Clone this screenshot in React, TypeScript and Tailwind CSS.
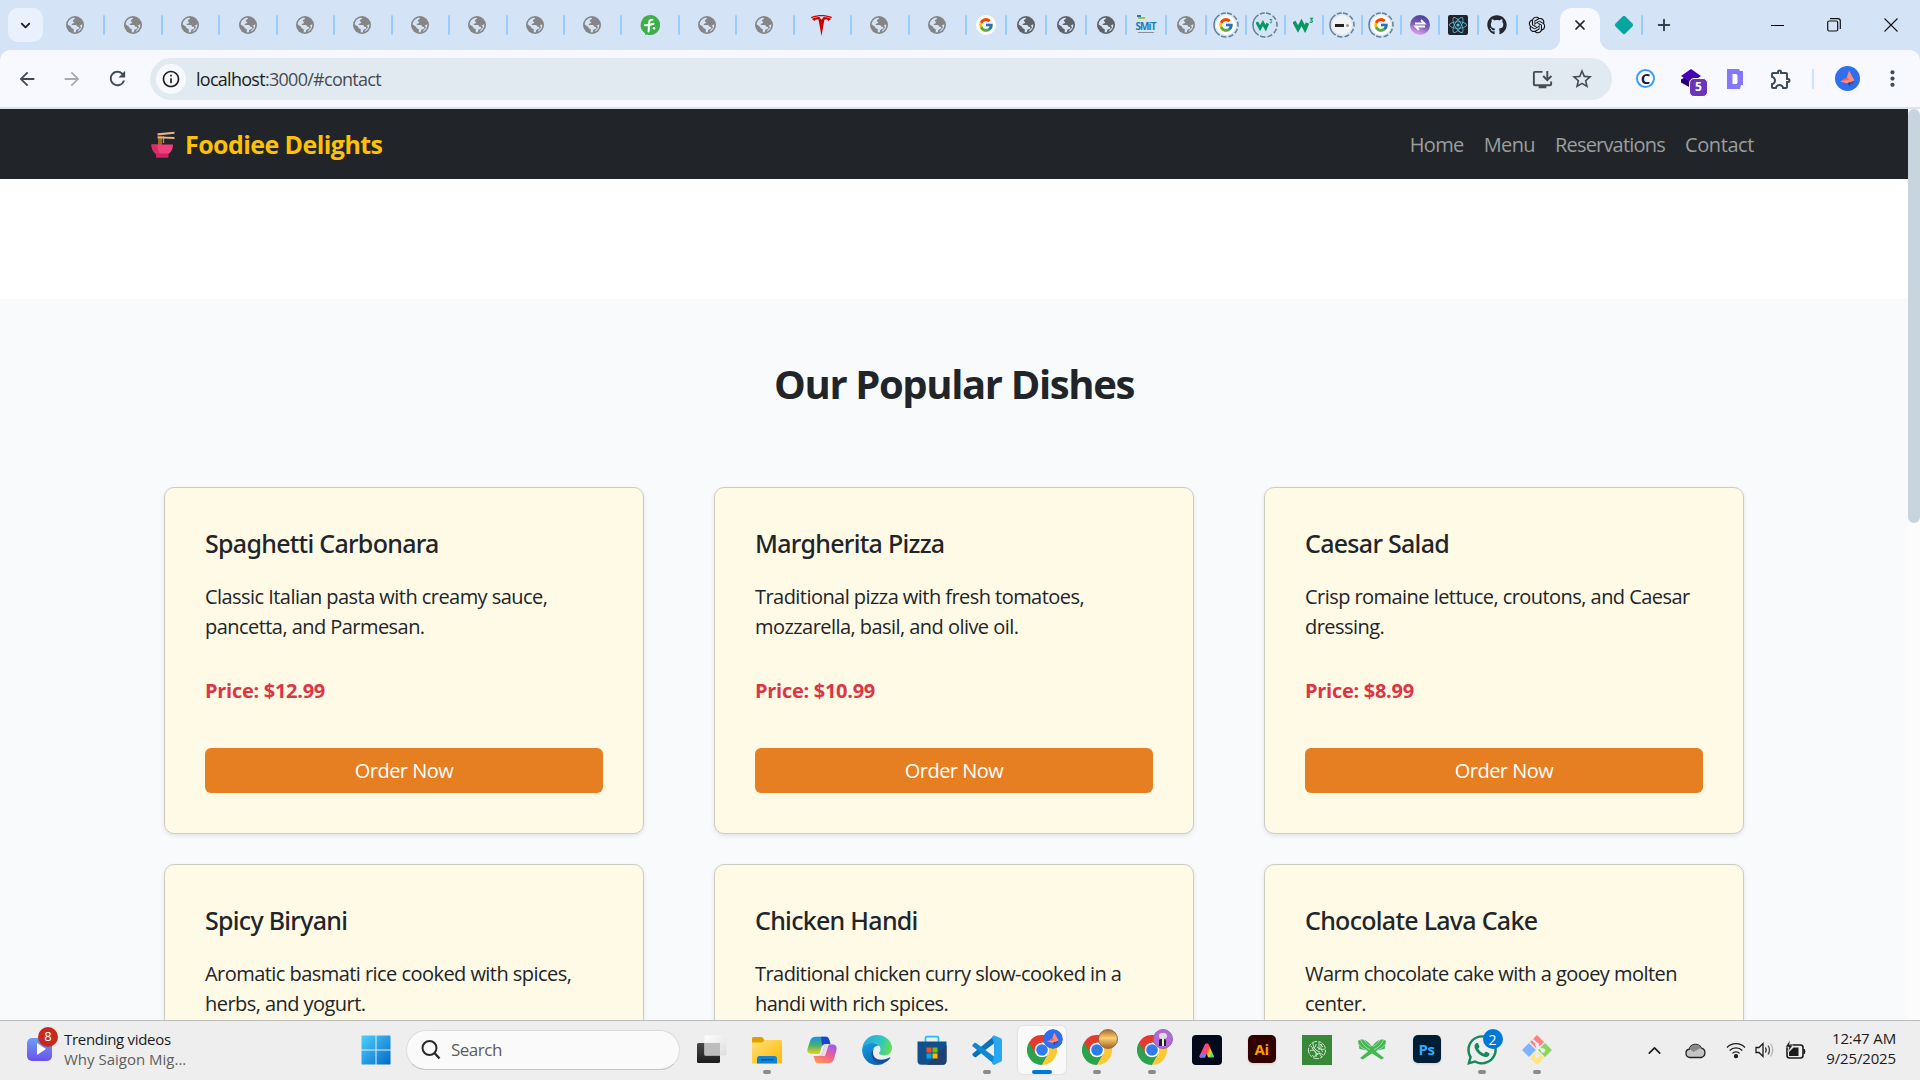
import type { ReactNode } from 'react';
import { FcGoogle } from 'react-icons/fc';
import { FaGithub, FaWhatsapp, FaReact } from 'react-icons/fa';
import { SiTesla } from 'react-icons/si';
import {
  MdArrowBack,
  MdArrowForward,
  MdRefresh,
  MdInfoOutline,
  MdOutlineInstallDesktop,
  MdStarOutline,
  MdOutlineExtension,
  MdMoreVert,
} from 'react-icons/md';
import { RiOpenaiFill } from 'react-icons/ri';
import { ChevronDown, ChevronUp, Plus, X } from 'lucide-react';

/* ---------- tab favicons ---------- */

function Globe({ color = '#858585' }: { color?: string }) {
  return (
    <svg width="18" height="18" viewBox="0 0 18 18">
      <circle cx="9" cy="9" r="9" fill={color} />
      <path d="M1.700 8.500C1.800 5 4.500 2.200 8 1.700c.8 0 1.100.5.800 1.100-.3.700-1.500.8-1.900 1.600-.3.700.2 1.300 1.300 1.300.2 1.400-1 1.800-2 2-.9.200-.700 1.200.1 1.200h3.200c1.100 0 1.700.8 1.700 1.800 1.300.1 2.200.2 2.200 1.300 0 .8-.8 1.100-1.800 1.200-1 .1-1.500.9-1.600 2l-.1 1.100c-.7.1-1.500.1-2.200-.1l.1-2.200c0-1-.6-1.400-1.500-1.500-.9-.2-1.200-.8-1.200-1.700z" fill="#d5e3f7" />
      <path d="M16.200 8.300c.4 3.300-1.600 6.500-4.800 7.600l1.400-2.200c.5-.9 1.900-1 2-2.200.1-1-.5-1.500-1.300-1.700z" fill="#d5e3f7" />
    </svg>
  );
}

function DashedRing({ children }: { children: ReactNode }) {
  return (
    <span className="relative flex size-[26px] items-center justify-center">
      <svg className="absolute inset-0" width="26" height="26" viewBox="0 0 26 26" fill="none">
        <path d="M13 25a12 12 0 0 1 0-24" stroke="#5f8299" strokeWidth="1.500" strokeDasharray="5 1.600 24 1.600" />
        <path d="M13 1a12 12 0 0 1 0 24" stroke="#5f8299" strokeWidth="1.500" strokeDasharray="5 2.200" strokeDashoffset="-1" />
      </svg>
      {children}
    </span>
  );
}

function GoogleDisc({ size = 'size-5' }: { size?: string }) {
  return (
    <span className={`flex items-center justify-center rounded-full bg-white ${size}`}>
      <FcGoogle size={16} />
    </span>
  );
}

function W3({ small = false }: { small?: boolean }) {
  return (
    <svg width={small ? 17 : 21} height={small ? 14 : 16} viewBox="0 0 21 16" fill="none">
      <path d="M1 4.500 5 12l3.500-6.500L12 12l2.500-6" stroke="#059862" strokeWidth="3.600" />
      <path d="M16.800 1.200h2.800l-1.500 1.800c1.600 0 1.800 2.400.2 2.400-.8 0-1.300-.3-1.600-.8" stroke="#059862" strokeWidth="1.100" />
    </svg>
  );
}

function GreenF() {
  return (
    <svg width="20" height="22" viewBox="0 0 20 22">
      <path d="M10 1a10 10 0 1 1-3 19.500L5 21l.3-1.600A10 10 0 0 1 10 1z" fill="#3dae49" />
      <path d="M12.500 5.800C10.500 5.200 9.300 6.400 9.200 8.500L8.600 17.500M4.800 11.200c3 .3 5.500-.2 8.700-1.400" stroke="#fff" strokeWidth="2" fill="none" strokeLinecap="round" />
      <circle cx="14" cy="14.200" r="1.300" fill="#fff" />
    </svg>
  );
}

function Smit() {
  return (
    <span className="relative flex h-5 w-[18px] flex-col items-center justify-center">
      <span className="absolute top-0 left-0 h-[2px] w-[4px] bg-[#1c7bc0]" />
      <span className="absolute top-[2px] left-[1px] h-[2px] w-[7px] bg-[#9bc53d]" />
      <span className="mt-[4px] text-[10px] leading-[11px] font-bold tracking-[-0.09em] text-[#1c7bb5]">SMiT</span>
      <span className="h-px w-4 bg-[#8a8f94]" />
    </span>
  );
}

function PurpleSwap() {
  return (
    <svg width="20" height="20" viewBox="0 0 20 20">
      <defs>
        <linearGradient id="swap" x1="0.600" y1="0" x2="0.300" y2="1">
          <stop offset="0" stopColor="#45439b" />
          <stop offset="0.500" stopColor="#7d5bb8" />
          <stop offset="1" stopColor="#e6aaf0" />
        </linearGradient>
      </defs>
      <circle cx="10" cy="10" r="10" fill="url(#swap)" />
      <path d="M5 8.500h9.500L11 5M15 11.500H5.500L9 15" stroke="#fff" strokeWidth="1.800" fill="none" />
    </svg>
  );
}

const globe = <Globe />;
const darkGlobe = <Globe color="#5f6368" />;

const wideTabs: ReactNode[] = [
  globe, globe, globe, globe, globe, globe, globe, globe, globe, globe,
  <GreenF />, globe, globe,
  <SiTesla size={21} color="#cc0000" />,
  globe, globe,
];

const midTabs: ReactNode[] = [
  <GoogleDisc />, darkGlobe, darkGlobe, darkGlobe, <Smit />, globe,
  <DashedRing><GoogleDisc /></DashedRing>,
];

const narrowTabs: ReactNode[] = [
  <DashedRing><W3 small /></DashedRing>,
  <W3 />,
  <DashedRing>
    <span className="flex size-5 items-center justify-center gap-[2px] rounded-full bg-[#f2f2f2]">
      <span className="h-[3px] w-[9px] bg-[#222]" />
      <span className="size-[3px] rounded-full bg-[#999]" />
    </span>
  </DashedRing>,
  <DashedRing><GoogleDisc /></DashedRing>,
  <PurpleSwap />,
  <span className="flex size-5 items-center justify-center rounded-[2px] bg-[#20232a]">
    <FaReact size={18} color="#58c4dc" />
  </span>,
  <FaGithub size={20} color="#24292f" />,
];

function Tab({ width, children }: { width: string; children: ReactNode }) {
  return (
    <div className={`flex h-full shrink-0 items-center justify-center ${width}`}>
      <span className="flex flex-1 items-center justify-center">{children}</span>
      <span className="-mr-px h-5 w-[2px] rounded-full bg-[#96ccff]" />
    </div>
  );
}

function TabStrip() {
  return (
    <div className="flex h-[50px] items-center bg-[#d5e3f7]">
      <button className="mr-1 ml-2 flex h-[34px] w-[35px] shrink-0 items-center justify-center rounded-[10px] bg-[#e8f1fd]">
        <ChevronDown size={15} strokeWidth={3} color="#1f1f1f" />
      </button>
      {wideTabs.map((icon, i) => <Tab key={i} width="w-[57.45px]">{icon}</Tab>)}
      {midTabs.map((icon, i) => <Tab key={i} width="w-[40px]">{icon}</Tab>)}
      {narrowTabs.map((icon, i) => <Tab key={i} width="w-[38.7px]">{icon}</Tab>)}
      <div className="flex w-[43px] shrink-0 items-center justify-center pr-[3px]">
        <RiOpenaiFill size={20} color="#111" />
      </div>
      <div className="relative flex h-[42px] w-[40px] shrink-0 items-center justify-center self-end rounded-t-xl bg-[#f8f9ff] pb-2">
        <span className="absolute bottom-0 -left-3 size-3 bg-[radial-gradient(circle_at_0_0,#d5e3f7_12px,#f8f9ff_12.500px)]" />
        <span className="absolute -right-3 bottom-0 size-3 bg-[radial-gradient(circle_at_100%_0,#d5e3f7_12px,#f8f9ff_12.500px)]" />
        <X size={16} strokeWidth={2.600} color="#1f1f1f" />
      </div>
      <div className="ml-[5px] flex h-full w-[38px] shrink-0 items-center justify-center">
        <span className="flex flex-1 justify-center pl-[2px]">
          <span className="size-[14px] rotate-45 rounded-[2px] bg-[#06a5a0]" />
        </span>
        <span className="h-5 w-[2px] rounded-full bg-[#96ccff]" />
      </div>
      <Plus className="ml-[12px]" size={18} strokeWidth={2.600} color="#33404f" />
      <div className="ml-auto flex items-center gap-[43px] pr-[22px]">
        <span className="h-px w-[13px] bg-black" />
        <svg width="14" height="14" viewBox="0 0 14 14" fill="none" stroke="#111" strokeWidth="1.200">
          <rect x="0.700" y="3" width="10" height="10" rx="1.500" />
          <path d="M3 .7h8a2.300 2.300 0 0 1 2.300 2.300v8" />
        </svg>
        <svg width="14" height="14" viewBox="0 0 14 14" stroke="#111" strokeWidth="1.100">
          <path d="M.5.5l13 13M13.500.5l-13 13" />
        </svg>
      </div>
    </div>
  );
}

function Bird({ className }: { className: string }) {
  return (
    <svg className={className} viewBox="0 0 25 25">
      <circle cx="12.500" cy="12.500" r="12.500" fill="#2f6fed" />
      <path d="M14 4.500 19.500 14.500 14 17.500 12 11z" fill="#ff8a76" />
      <path d="M5 15.500 12 11l3 4.500-2.500 1.500z" fill="#f2625c" />
      <path d="M5 15.500l9-1.500 1 2.500-3 .8z" fill="#ff8f7c" />
      <path d="M12.500 17l3-1 -.5 4.500z" fill="#283a8f" />
      <path d="M14 17l5.500-2.500-2 4z" fill="#4a4a9c" />
    </svg>
  );
}

function Toolbar() {
  return (
    <div className="bg-[#d5e3f7]">
      <div className="flex h-[59px] items-center rounded-t-[10px] border-b-2 border-[#dde3ea] bg-[#f8f9ff]">
        <div className="flex w-[150px] shrink-0 items-center gap-[23px] pl-4">
          <MdArrowBack size={22} color="#3f4b57" />
          <MdArrowForward size={22} color="#a9adb3" />
          <MdRefresh size={23} color="#3f4b57" />
        </div>
        <div className="flex h-[42px] w-[1462px] shrink-0 items-center rounded-full bg-[#e2eaf1] pr-[18px] pl-[6px]">
          <span className="flex size-[30px] items-center justify-center rounded-full bg-[#f8f9ff]">
            <MdInfoOutline size={20} color="#1f1f1f" />
          </span>
          <span className="mt-[2px] ml-[10px] text-[18px] tracking-[-0.72px] text-[#474c52]">
            <span className="text-[#1a1d21]">localhost</span>:3000/#contact
          </span>
          <MdOutlineInstallDesktop className="mt-px ml-auto" size={23} color="#474c52" />
          <MdStarOutline className="mt-px ml-[16px]" size={24} color="#474c52" />
        </div>
        <div className="flex flex-1 items-center">
          <span className="ml-6 flex size-[19px] shrink-0 items-center justify-center rounded-full border-2 border-[#3d9bf5] bg-white text-[15px] leading-none font-bold text-[#101c4a]">
            C
          </span>
          <span className="relative ml-[25px] size-[22px] shrink-0">
            <svg width="22" height="22" viewBox="0 0 22 22">
              <path d="M1 11.500 11 6l10 5.500v3L11 20 1 14.500z" fill="#21006b" />
              <path d="M1 8 11 1l10 7-10 7z" fill="#4a00b4" />
            </svg>
            <span className="absolute top-[10px] left-[9px] flex size-[19px] items-center justify-center rounded-[5px] border border-white bg-[#6a35b8] text-[12px] font-bold text-white">
              5
            </span>
          </span>
          <svg className="ml-[25px] shrink-0" width="16" height="20" viewBox="0 0 16 20">
            <path d="M0 0h12l1 2h3v14h-2l-1 4H0z" fill="#8478ff" />
            <path d="M5.500 5h4l1 1.500v7L9.500 15h-4z" fill="#fff" />
          </svg>
          <MdOutlineExtension className="ml-[26px] shrink-0" size={24} color="#3f4b57" />
          <span className="ml-[19px] h-5 w-[2px] shrink-0 bg-[#cfe4fb]" />
          <Bird className="ml-[21px] size-[25px] shrink-0" />
          <MdMoreVert className="ml-[20px] shrink-0" size={25} color="#3f4b57" />
        </div>
      </div>
    </div>
  );
}

/* ---------- web page ---------- */

interface Dish {
  name: string;
  lines: [string, string];
  price?: string;
}

const dishes: Dish[] = [
  { name: 'Spaghetti Carbonara', lines: ['Classic Italian pasta with creamy sauce,', 'pancetta, and Parmesan.'], price: '12.99' },
  { name: 'Margherita Pizza', lines: ['Traditional pizza with fresh tomatoes,', 'mozzarella, basil, and olive oil.'], price: '10.99' },
  { name: 'Caesar Salad', lines: ['Crisp romaine lettuce, croutons, and Caesar', 'dressing.'], price: '8.99' },
  { name: 'Spicy Biryani', lines: ['Aromatic basmati rice cooked with spices,', 'herbs, and yogurt.'] },
  { name: 'Chicken Handi', lines: ['Traditional chicken curry slow-cooked in a', 'handi with rich spices.'] },
  { name: 'Chocolate Lava Cake', lines: ['Warm chocolate cake with a gooey molten', 'center.'] },
];

function NoodleBowl() {
  return (
    <svg width="24" height="27" viewBox="0 0 24 27">
      <path d="M8 5v9M10 5v9M12.500 5v7" stroke="#c98a1b" strokeWidth="1.400" />
      <path d="M6.500 2.200 23.500 .8v2L6.500 4.500zM6.500 5.500l17 .6v2l-17-.8z" fill="#e8b08c" />
      <path d="M.5 13.500h21.500c0 5-2.500 8.500-5.500 10H6C3 22 .5 18.500.5 13.500z" fill="#f0407f" />
      <path d="M.5 13.500h6c0 5 1 8 3 10H6C3 22 .5 18.500.5 13.500z" fill="#d92d6b" />
      <path d="M5 22.500h12.500V26a1 1 0 0 1-1 .8H6A1 1 0 0 1 5 26z" fill="#c9265c" />
    </svg>
  );
}

function DishCard({ dish }: { dish: Dish }) {
  return (
    <article className="flex h-[347px] flex-col rounded-[10px] border border-[#cdccc4] bg-[#fffae6] p-10 text-[#212529] shadow-[0_2px_5px_rgba(0,0,0,0.09)]">
      <h3 className="font-['Noto_Sans'] text-[25px] leading-[30px] font-medium tracking-[-0.72px]">{dish.name}</h3>
      <p className="mt-6 text-[20px] leading-[30px] tracking-[-0.55px] whitespace-nowrap">
        {dish.lines[0]}
        <br />
        {dish.lines[1]}
      </p>
      {dish.price && (
        <>
          <p className="mt-[34px] text-[20px] leading-[30px] font-bold tracking-[-0.28px] text-[#dc3545]">Price: ${dish.price}</p>
          <button className="mt-auto h-[45px] w-full rounded-[6px] bg-[#e67e22] text-[20px] tracking-[-0.5px] text-white">Order Now</button>
        </>
      )}
    </article>
  );
}

function WebPage() {
  return (
    <div className="flex min-h-0 flex-1 overflow-hidden bg-white">
      <main className="flex w-[1908px] flex-col">
        <nav className="flex h-[70px] shrink-0 items-center justify-between bg-[#212529] pr-[154px] pl-[151px]">
          <div className="flex items-center gap-[10px] text-[25px] font-bold tracking-[-0.57px] text-[#ffc107]">
            <NoodleBowl />
            <span className="mt-[2px]">Foodiee Delights</span>
          </div>
          <div className="mt-[2px] flex items-center gap-5 text-[20px] tracking-[-0.64px] text-[#9b9d9e]">
            <a>Home</a>
            <a>Menu</a>
            <a className="tracking-[-0.8px]">Reservations</a>
            <a className="tracking-[-0.4px]">Contact</a>
          </div>
        </nav>
        <div className="h-[120px] shrink-0 bg-white" />
        <section className="flex-1 bg-[#f8fafc] px-[164px] pt-[61px]">
          <h2 className="text-center text-[40px] leading-[48px] font-bold tracking-[-1.370px] text-[#212529]">Our Popular Dishes</h2>
          <div className="mt-[79px] grid grid-cols-[480px_480px_480px] gap-x-[70px] gap-y-[30px]">
            {dishes.map((d) => <DishCard key={d.name} dish={d} />)}
          </div>
        </section>
      </main>
      <div className="w-3 bg-[#fcfcfc]">
        <div className="h-[414px] rounded-full bg-[#c8d5de]" />
      </div>
    </div>
  );
}

/* ---------- taskbar ---------- */

function WindowsLogo() {
  return (
    <svg className="shrink-0" width="30" height="30" viewBox="0 0 30 30">
      <defs>
        <linearGradient id="win" gradientUnits="userSpaceOnUse" x1="0" y1="0" x2="30" y2="30">
          <stop offset="0" stopColor="#4fd2ff" />
          <stop offset="1" stopColor="#0068c6" />
        </linearGradient>
      </defs>
      <path d="M1 .5h13.500v14H.5V1zM15.500.5H29l.5.5v13.500h-14zM.5 15.500h14v14H1l-.5-.5zM15.500 15.500h14V29l-.5.5H15.500z" fill="url(#win)" />
    </svg>
  );
}

function TaskView() {
  return (
    <svg width="30" height="30" viewBox="0 0 30 30">
      <defs>
        <linearGradient id="tv" x1="0" y1="0" x2="0" y2="1">
          <stop offset="0" stopColor="#4a4a48" />
          <stop offset="1" stopColor="#1c1c1c" />
        </linearGradient>
        <linearGradient id="tvFront" x1="0" y1="0" x2="1" y2="1">
          <stop offset="0" stopColor="#ffffff" />
          <stop offset="1" stopColor="#dcdcdc" />
        </linearGradient>
      </defs>
      <rect x="0" y="8" width="23" height="20" rx="1.500" fill="url(#tv)" />
      <rect x="7.500" y="0.500" width="22" height="20" rx="1.500" fill="url(#tvFront)" />
      <rect x="7.500" y="8" width="15.500" height="12.500" fill="#bdbdbd" />
    </svg>
  );
}

function Folder() {
  return (
    <svg width="30" height="30" viewBox="0 0 30 30">
      <defs>
        <linearGradient id="fold" x1="0" y1="0" x2="1" y2="1">
          <stop offset="0" stopColor="#ffe07a" />
          <stop offset="1" stopColor="#ffb900" />
        </linearGradient>
      </defs>
      <path d="M0 3.500C0 2.500.700 2 1.500 2H10l3 3.500V9H0z" fill="#e0a000" />
      <path d="M0 7.500h10L13 5h15.500c1 0 1.500.600 1.500 1.500v22H0z" fill="url(#fold)" />
      <path d="M5 28.500v-5c0-1.500 1-2.500 2.500-2.500h15c1.500 0 2.500 1 2.500 2.500v5z" fill="#1482d2" />
      <path d="M9 24.700h12.500" stroke="#06549b" strokeWidth="1.300" />
    </svg>
  );
}

function Copilot() {
  return (
    <svg width="30" height="28" viewBox="0 0 30 28">
      <defs>
        <linearGradient id="cpA" x1="0" y1="0" x2="0" y2="1">
          <stop offset="0" stopColor="#1b8fe8" />
          <stop offset="0.500" stopColor="#47b26b" />
          <stop offset="1" stopColor="#f2cf1d" />
        </linearGradient>
        <linearGradient id="cpB" x1="0.800" y1="0" x2="0.200" y2="1">
          <stop offset="0" stopColor="#9a5cf0" />
          <stop offset="0.500" stopColor="#f0608f" />
          <stop offset="1" stopColor="#fb9a53" />
        </linearGradient>
      </defs>
      <path d="M9 .8h10c2 0 2.700 1.300 3.300 3.200l1.200 4h-5c-2.500 0-3.300 1.200-4 3.300L12.500 18H4C.800 18-.200 15.500.6 12.500l2.600-8C4 2 6 .8 9 .8z" fill="url(#cpA)" />
      <path d="M14 .8h5c2 0 2.700 1.300 3.300 3.200l1.200 4h-5c-1.500 0-2.700.5-3.300 2z" fill="#1748c8" />
      <path d="M21 27.200H11c-2 0-2.700-1.300-3.300-3.200L6.500 20h5c2.500 0 3.300-1.200 4-3.300L18 8.500h8c3.200 0 4.200 3 3.400 6l-2.600 9c-.8 2.500-2.800 3.700-5.800 3.700z" fill="url(#cpB)" />
      <path d="M18 8h4L18 20h-5c1.300 0 2-1.200 2.600-3.300z" fill="#eef" fillOpacity="0.850" />
    </svg>
  );
}

function Edge() {
  return (
    <svg width="30" height="30" viewBox="0 0 30 30">
      <defs>
        <linearGradient id="edA" x1="0" y1="0.300" x2="1" y2="0.500">
          <stop offset="0" stopColor="#2aa6e0" />
          <stop offset="0.600" stopColor="#2fc6c4" />
          <stop offset="1" stopColor="#66dd52" />
        </linearGradient>
        <linearGradient id="edB" x1="0" y1="0" x2="0.500" y2="1">
          <stop offset="0" stopColor="#1b9de2" />
          <stop offset="1" stopColor="#0767b9" />
        </linearGradient>
      </defs>
      <path d="M.3 13.500C1 6 7 0 15 0c9 0 15 6.500 15 13 0 4.500-3.300 7.500-7.500 7.500-3.500 0-5.500-1.300-5.500-2.500 0-.8 1.500-1.400 1.500-3.800 0-3.300-3.200-6.200-7.700-6.200C5.500 8 1.500 10.500.3 13.500z" fill="url(#edA)" />
      <path d="M.2 14C1 10.500 5 8 10.500 8c3 0 5.500 1.200 7 3-4-1-7.500 2.500-7 7C11 24 16 28 23 27.500 20.500 29.300 18 30 15 30 6 30-.500 22 .2 14z" fill="url(#edB)" />
      <path d="M12.500 13c-1 1.200-1.500 2.500-1.500 4.500C11 24 18 27 27.500 22.500c.7-.3 1.200.2.700.8-3.700 5.200-9.700 5.700-12.700 4.400C9 25.200 7.500 16.500 12.500 13z" fill="#124f9c" />
    </svg>
  );
}

function Store() {
  return (
    <svg width="30" height="30" viewBox="0 0 30 30">
      <path d="M8.500 7V3c0-.8.500-1.300 1.300-1.300h10.400c.8 0 1.300.5 1.300 1.300v4" stroke="#24bdf2" strokeWidth="1.700" fill="none" />
      <path d="M.5 6.500h29V26c0 2.200-1.600 3.700-3.700 3.700H4.200C2 29.700.5 28.200.5 26z" fill="#12508c" />
      <path d="M10 29.700 29.500 10v16c0 2.200-1.600 3.700-3.700 3.700z" fill="#213f70" />
      <path d="M9.500 12.500h5v5h-5z" fill="#f25022" />
      <path d="M15.500 12.500h5v5h-5z" fill="#7fba00" />
      <path d="M9.500 18.500h5v5h-5z" fill="#00a4ef" />
      <path d="M15.500 18.500h5v5h-5z" fill="#ffb900" />
    </svg>
  );
}

function VsCode() {
  return (
    <svg width="30" height="30" viewBox="0 0 30 30">
      <path d="M22 1 .8 18.500c-.6.600-.6 1.300 0 1.900l1.600 1.500c.5.400 1.100.4 1.700 0L22 8.500z" fill="#0a70b8" />
      <path d="M22 29 .8 11.500c-.6-.600-.6-1.300 0-1.900l1.600-1.500c.5-.400 1.100-.4 1.700 0L22 21.500z" fill="#1388d2" />
      <path d="M22 .2 28.800 3.300c.8.400 1.200 1 1.200 1.900v19.600c0 .9-.4 1.500-1.200 1.900L22 29.900l-2-1.500 2-6.900v-13L20 1.700z" fill="#2aa7f2" />
    </svg>
  );
}

function Chrome({ badge }: { badge: ReactNode }) {
  return (
    <span className="relative block size-[30px]">
      <svg width="30" height="30" viewBox="0 0 30 30">
        <path d="M2 7.500A15 15 0 0 0 15 30l6.500-11.300L15 15z" fill="#2ba24c" />
        <path d="M28 7.500H15L21.500 18.700 15 30A15 15 0 0 0 28 7.500z" fill="#fcc934" />
        <path d="M2 7.500A15 15 0 0 1 28 7.500H15L8.500 18.700z" fill="#e33b2e" />
        <circle cx="15" cy="15" r="7.300" fill="#fff" />
        <circle cx="15" cy="15" r="5.800" fill="#2f7bed" />
      </svg>
      <span className="absolute -top-[6px] left-4 size-5">{badge}</span>
    </span>
  );
}

function Adobe({ label, colors }: { label: string; colors: string }) {
  return (
    <span className={`mb-[2px] flex size-7 items-center justify-center rounded-[5px] text-[15px] font-bold tracking-[-0.5px] shadow ${colors}`}>
      {label}
    </span>
  );
}

function Express() {
  return (
    <span className="flex size-[30px] items-center justify-center rounded-[4px] bg-[#020a1c]">
      <svg width="17" height="17" viewBox="0 0 17 17">
        <defs>
          <linearGradient id="ax" x1="0" y1="0.200" x2="1" y2="0.600">
            <stop offset="0" stopColor="#b457ff" />
            <stop offset="0.350" stopColor="#ff3f8e" />
            <stop offset="0.600" stopColor="#ff5a2a" />
            <stop offset="0.800" stopColor="#ffd12a" />
            <stop offset="1" stopColor="#43dd80" />
          </linearGradient>
        </defs>
        <path d="M2.300 14.500 8 2.500h1.500l5.500 12h-4.200L8.700 9 6.300 14.500z" fill="url(#ax)" stroke="url(#ax)" strokeWidth="2" strokeLinejoin="round" />
        <path d="M2 15.500h5L8 12l-4-1z" fill="#6c7bff" />
      </svg>
    </span>
  );
}

function Calligraphy() {
  return (
    <span className="flex size-[30px] items-center justify-center bg-[#38883a]">
      <svg width="20" height="20" viewBox="0 0 20 20" fill="none" stroke="#d9eed9" strokeWidth="0.900">
        <circle cx="10" cy="10" r="8.600" strokeDasharray="6 1.500 3 1" />
        <path d="M4 6c2 4 5 1 5-2M6 3c0 5 3 8 7 9M12 2v8M15 4c-2 3-1 6 1 8M3 11c3-2 6 0 6 3s-3 3-4 1M9 17c0-3 3-6 7-2M10 7c2 2 5 3 8 2M5 8l6 7M12 13l3 4M13 4l3 3" />
      </svg>
    </span>
  );
}

function BookStand() {
  return (
    <svg className="mb-[2px]" width="30" height="22" viewBox="0 0 30 22" fill="#43b653">
      <path d="M1 3C3 .5 9 0 15 8.500 21 0 27 .5 29 3l-1.500 8c-4 .5-6.500 1-8.500 2.500l8 6.500-2.500 1.500L15 15.500 5.500 21.500 3 20l8-6.500C9 12 6.500 11.500 2.500 11z" />
      <path d="M3.500 1.500c1 4 6 9 9.500 10M6.500.5c1 3.500 4 6 7.500 8M26.500 1.500c-1 4-6 9-9.500 10M23.500.5c-1 3.500-4 6-7.500 8M1.500 6c2 3 5 5 9 6.500M28.500 6c-2 3-5 5-9 6.500" stroke="#eeeeee" strokeWidth="0.600" fill="none" />
    </svg>
  );
}

function GitDiamond() {
  return (
    <svg width="30" height="30" viewBox="0 0 30 30">
      <path d="M15 0l7 7-7 7-7-7z" fill="#ff8080" />
      <path d="M7 8l7 7-7 7-7-7z" fill="#80b3ff" />
      <path d="M23 8l7 7-7 7-7-7z" fill="#8dd35f" />
      <path d="M15 16l7 7-7 7-7-7z" fill="#ffe680" />
      <path d="M10.500 4.500 15 9v11M15 10l6 6" stroke="#eee" strokeWidth="1.800" fill="none" />
      <circle cx="15" cy="9.500" r="2" fill="#eee" />
      <circle cx="15" cy="20.500" r="2.200" fill="#eee" />
      <circle cx="21" cy="15.500" r="2.200" fill="#eee" />
    </svg>
  );
}

interface TaskItem {
  icon: ReactNode;
  running?: boolean;
  active?: boolean;
}

const taskItems: TaskItem[] = [
  { icon: <TaskView /> },
  { icon: <Folder />, running: true },
  { icon: <Copilot /> },
  { icon: <Edge /> },
  { icon: <Store /> },
  { icon: <VsCode />, running: true },
  { icon: <Chrome badge={<Bird className="size-5 rounded-full" />} />, active: true },
  {
    icon: <Chrome badge={<span className="block size-5 rounded-full border border-[#8b6a50] bg-linear-to-b from-[#b06b28] via-[#fbd271] via-45% to-[#a8642c]" />} />,
    running: true,
  },
  {
    icon: (
      <Chrome
        badge={
          <span className="flex size-5 flex-col items-center justify-center rounded-full border border-[#8c6ba8] bg-[#b568dc]">
            <span className="h-[6px] w-[8px] rounded-[3px] bg-[#ddd]" />
            <span className="flex h-[7px] w-[7px] justify-center rounded-t-[2px] bg-[#222]">
              <span className="h-full w-[2px] bg-[#eee]" />
            </span>
          </span>
        }
      />
    ),
    running: true,
  },
  { icon: <Express /> },
  { icon: <Adobe label="Ai" colors="bg-[#330000] text-[#ff9a00]" /> },
  { icon: <Calligraphy /> },
  { icon: <BookStand /> },
  { icon: <Adobe label="Ps" colors="bg-[#001e36] text-[#31a8ff]" /> },
  {
    icon: (
      <span className="relative">
        <FaWhatsapp size={34} color="#17885a" />
        <span className="absolute -top-[4px] left-[18px] flex size-5 items-center justify-center rounded-full bg-[#0078d7] text-[14px] text-white">2</span>
      </span>
    ),
    running: true,
  },
  { icon: <GitDiamond />, running: true },
];

function Taskbar() {
  return (
    <footer className="flex h-[60px] shrink-0 items-center border-t border-[#bcbcbc] bg-[#eeeeee] pb-px">
      <div className="flex w-[361px] shrink-0 items-center pl-[27px]">
        <span className="relative -mt-[2px] flex h-[23px] w-[25px] items-center justify-center rounded-[5px] bg-linear-to-b from-[#6f9cf2] to-[#6a4fee]">
          <span className="ml-[3px] h-0 w-0 border-y-[6px] border-l-[9px] border-y-transparent border-l-white" />
          <span className="absolute -top-[11px] left-[11px] flex size-5 items-center justify-center rounded-full bg-[#c42b1c] text-[13px] text-white">8</span>
        </span>
        <div className="-mt-[3px] ml-[12px] text-[15px] leading-5">
          <div className="tracking-[-0.3px] text-[#1b1b1b]">Trending videos</div>
          <div className="text-[#5e5e5e]">Why Saigon Mig...</div>
        </div>
      </div>
      <WindowsLogo />
      <div className="ml-[15px] flex h-10 w-[274px] shrink-0 items-center rounded-full border border-[#dcdcdc] border-b-[#c4c4c4] bg-[#fafafa] pl-[14px]">
        <svg width="20" height="20" viewBox="0 0 20 20" fill="none" stroke="#2a2a2a" strokeWidth="2">
          <circle cx="8.500" cy="8" r="7" />
          <path d="M13.500 13l5 5.500" strokeWidth="2.400" />
        </svg>
        <span className="ml-[10px] text-[17px] tracking-[-0.5px] text-[#5c5c5c]">Search</span>
      </div>
      <div className="ml-1 flex h-full shrink-0">
        {taskItems.map((t, i) => (
          <div key={i} className="flex h-full w-[55px] items-center justify-center">
            <div className={`relative flex size-12 items-center justify-center rounded-[5px] ${t.active ? 'bg-[#f9f9f9] shadow-[0_0_1px_1px_#e2e2e2]' : ''}`}>
              {t.icon}
              {t.running && <span className="absolute bottom-0 h-1 w-2 rounded-full bg-[#8a8a8a]" />}
              {t.active && <span className="absolute bottom-0 h-1 w-5 rounded-full bg-[#0078d7]" />}
            </div>
          </div>
        ))}
      </div>
      <div className="ml-auto flex items-center pr-6">
        <ChevronUp size={21} strokeWidth={1.900} color="#1b1b1b" />
        <svg className="ml-[20px]" width="21" height="18" viewBox="0 0 21 18">
          <path d="M5 16.500a4.300 4.300 0 0 1-.6-8.500A6.300 6.300 0 0 1 16 6.800a5 5 0 0 1 .3 9.700z" fill="#c4c4c4" stroke="#222" strokeWidth="1.300" />
          <path d="M4.500 8A6.200 6.200 0 0 1 16 6.800L8.500 11z" fill="#888" />
        </svg>
        <svg className="ml-5" width="20" height="18" viewBox="0 0 20 18" fill="none" stroke="#1b1b1b" strokeWidth="1.300">
          <path d="M1 6.500a12.500 12.500 0 0 1 18 0M3.700 9.500a8.700 8.700 0 0 1 12.600 0M6.400 12.400a5 5 0 0 1 7.200 0" />
          <circle cx="10" cy="15.200" r="1.500" fill="#1b1b1b" />
        </svg>
        <svg className="ml-[9px]" width="20" height="18" viewBox="0 0 20 18" fill="none" stroke="#1b1b1b" strokeWidth="1.300">
          <path d="M1 6.500h3L8 2.500v13l-4-4H1zM10.500 6.500q1.500 2.500 0 5" />
          <path d="M13 4.500q3 4.500 0 9" stroke="#444" />
          <path d="M15.500 2.500q4.500 6.500 0 13" stroke="#b5b5b5" />
        </svg>
        <svg className="ml-[10px]" width="22" height="20" viewBox="0 0 22 20" fill="none">
          <rect x="2" y="5" width="16" height="13" rx="2.500" stroke="#1b1b1b" strokeWidth="1.600" />
          <path d="M8.500 7.500h5V16H4v-4z" fill="#1b1b1b" />
          <path d="M19 9q2 2.500 0 5z" fill="#1b1b1b" stroke="#1b1b1b" />
          <path d="M5 0 .5 7H4l-1 5 5-7H4.500z" fill="#1b1b1b" stroke="#eee" strokeWidth="0.500" />
        </svg>
        <div className="-mt-[4px] ml-[17px] w-[72px] text-right text-[15px] leading-5 tracking-[-0.14px] text-[#1b1b1b]">
          <div>12:47 AM</div>
          <div>9/25/2025</div>
        </div>
      </div>
    </footer>
  );
}

export default function App() {
  return (
    <div className="flex h-[1080px] w-[1920px] flex-col overflow-hidden bg-white font-['Open_Sans','Noto_Sans',sans-serif]">
      <TabStrip />
      <Toolbar />
      <WebPage />
      <Taskbar />
    </div>
  );
}
